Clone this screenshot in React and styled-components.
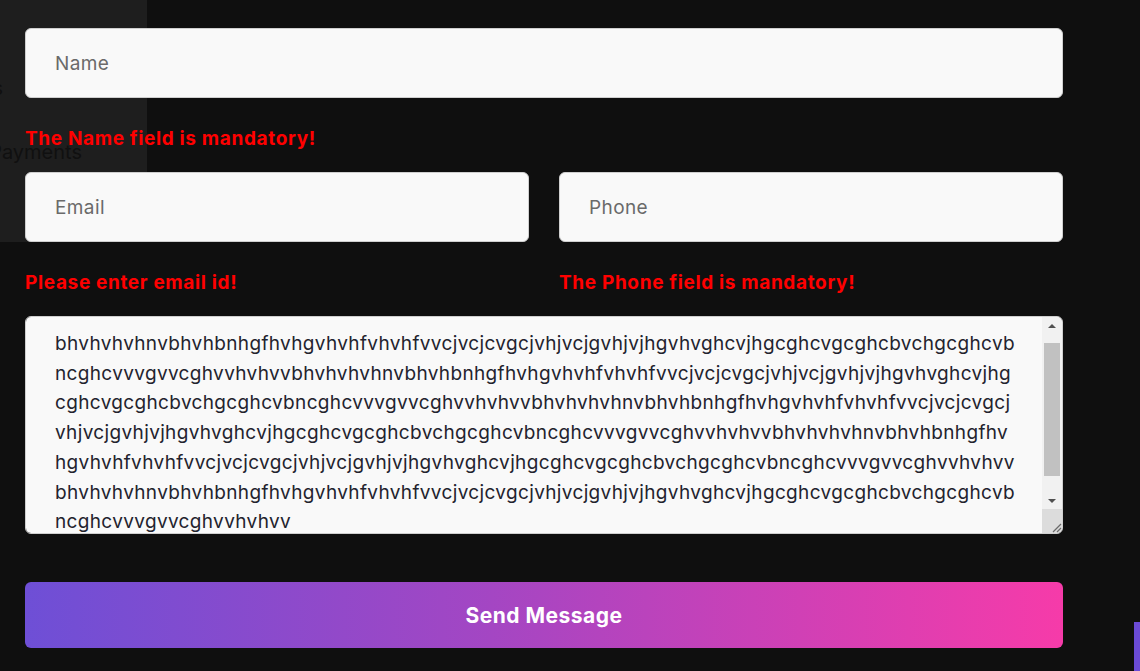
import React, { useEffect, useRef } from "react";
import styled, { createGlobalStyle } from "styled-components";

const GlobalStyle = createGlobalStyle`
  html, body {
    margin: 0;
    padding: 0;
    background: #0f0f0f;
  }
  body {
    font-family: Inter, "Open Sans", sans-serif;
    overflow: hidden;
  }
`;

const Page = styled.div`
  position: relative;
  width: 1140px;
  height: 671px;
  overflow: hidden;
  background: #0f0f0f;
`;

// sidebar peeking out behind the form
const SidePanel = styled.aside`
  position: absolute;
  left: 0;
  top: 0;
  width: 147px;
  height: 242px;
  background: #1e1e1e;
  z-index: 0;
`;

const SideItem = styled.div`
  position: absolute;
  right: ${(p) => p.$right}px;
  top: ${(p) => p.$top}px;
  font-size: 20px;
  color: #101010;
  white-space: nowrap;
`;

const ScrollTopTab = styled.div`
  position: absolute;
  left: 1134px;
  top: 622px;
  width: 40px;
  height: 60px;
  background: #6b4bd6;
`;

const Form = styled.form`
  position: relative;
  z-index: 1;
  width: 1038px;
  padding: 28px 0 0 25px;
  display: flex;
  flex-direction: column;
`;

const Row = styled.div`
  display: grid;
  grid-template-columns: ${(p) => (p.$split ? "1fr 1fr" : "1fr")};
  column-gap: 30px;
`;

const Field = styled.div`
  display: flex;
  flex-direction: column;
`;

const Input = styled.input`
  box-sizing: border-box;
  height: 70px;
  width: 100%;
  padding: 0 29px;
  border: 1px solid #cfcfcf;
  border-radius: 6px;
  background: #f9f9f9;
  font-family: Inter, "Open Sans", sans-serif;
  font-size: 19px;
  color: #222;
  outline: none;

  &::placeholder {
    color: #6a6a6a;
    letter-spacing: 0.4px;
  }
`;

const ErrorText = styled.div`
  margin: 31px 0 23px;
  height: 20px;
  line-height: 20px;
  font-family: Inter, "Open Sans", sans-serif;
  font-size: 19px;
  font-weight: 700;
  color: #ff0000;
  letter-spacing: 0.65px;
`;

const MessageWrap = styled.div`
  position: relative;
  height: 218px;
`;

const MessageBox = styled.textarea`
  display: block;
  box-sizing: border-box;
  width: 100%;
  height: 218px;
  padding: 30px 28px 30px 29px;
  border: 1px solid #cfcfcf;
  border-radius: 6px;
  background: #f9f9f9;
  font-family: Inter, "Open Sans", sans-serif;
  font-size: 19px;
  line-height: 29.7px;
  letter-spacing: 0.35px;
  color: #23232e;
  overflow-y: scroll;
  white-space: pre-wrap;
  resize: none;
  outline: none;
  scrollbar-width: none;

  &::-webkit-scrollbar {
    display: none;
  }
`;

/* drawn scrollbar + resize corner lying over the textarea's right edge */
const Rail = styled.div`
  position: absolute;
  top: 1px;
  right: 1px;
  bottom: 1px;
  width: 20px;
  display: flex;
  flex-direction: column;
  background: #f1f1f1;
  border-top-right-radius: 5px;
  border-bottom-right-radius: 5px;
  overflow: hidden;
`;

const RailButton = styled.div`
  height: 17px;
  display: flex;
  align-items: center;
  justify-content: center;

  &::before {
    content: "";
    border-left: 4px solid transparent;
    border-right: 4px solid transparent;
    ${(p) =>
      p.$down ? "border-top: 4px solid #505050;" : "border-bottom: 4px solid #505050;"}
  }
`;

const Track = styled.div`
  flex: 1;
  padding: 9px 2px 0;
`;

const Thumb = styled.div`
  height: 133px;
  background: #c1c1c1;
`;

const Corner = styled.div`
  height: 24px;
  background: #dcdcdc;
  display: flex;
  align-items: flex-end;
  justify-content: flex-end;
`;

const SendButton = styled.button`
  margin-top: 48px;
  height: 66px;
  width: 100%;
  border: none;
  border-radius: 6px;
  background: linear-gradient(90deg, #6e4fd6 0%, #a446c3 45%, #f63ba9 100%);
  color: #fff;
  font-family: Inter, "Open Sans", sans-serif;
  font-size: 21px;
  font-weight: 700;
  letter-spacing: 0.5px;
  cursor: pointer;
`;

const message = [
  "bhvhvhvhnvbhvhbnhgfhvhgvhvhfvhvhfvvcjvcjcvgcjvhjvcjgvhjvjhgvhvghcvjhgcghcvgcghcbvchgcghcvb",
  "ncghcvvvgvvcghvvhvhvvbhvhvhvhnvbhvhbnhgfhvhgvhvhfvhvhfvvcjvcjcvgcjvhjvcjgvhjvjhgvhvghcvjhg",
  "cghcvgcghcbvchgcghcvbncghcvvvgvvcghvvhvhvvbhvhvhvhnvbhvhbnhgfhvhgvhvhfvhvhfvvcjvcjcvgcj",
  "vhjvcjgvhjvjhgvhvghcvjhgcghcvgcghcbvchgcghcvbncghcvvvgvvcghvvhvhvvbhvhvhvhnvbhvhbnhgfhv",
  "hgvhvhfvhvhfvvcjvcjcvgcjvhjvcjgvhjvjhgvhvghcvjhgcghcvgcghcbvchgcghcvbncghcvvvgvvcghvvhvhvv",
  "bhvhvhvhnvbhvhbnhgfhvhgvhvhfvhvhfvvcjvcjcvgcjvhjvcjgvhjvjhgvhvghcvjhgcghcvgcghcbvchgcghcvb",
  "ncghcvvvgvvcghvvhvhvv",
].join("\n");

export default function App() {
  const boxRef = useRef(null);

  useEffect(() => {
    if (boxRef.current) boxRef.current.scrollTop = 18;
  }, []);

  return (
    <Page>
      <GlobalStyle />
      <SidePanel>
        <SideItem $right={144} $top={76}>Orders</SideItem>
        <SideItem $right={65} $top={140}>Payments</SideItem>
      </SidePanel>

      <Form onSubmit={(e) => e.preventDefault()}>
        <Row>
          <Field>
            <Input placeholder="Name" />
            <ErrorText>The Name field is mandatory!</ErrorText>
          </Field>
        </Row>
        <Row $split>
          <Field>
            <Input placeholder="Email" />
            <ErrorText>Please enter email id!</ErrorText>
          </Field>
          <Field>
            <Input placeholder="Phone" />
            <ErrorText>The Phone field is mandatory!</ErrorText>
          </Field>
        </Row>
        <MessageWrap>
          <MessageBox ref={boxRef} defaultValue={message} />
          <Rail>
            <RailButton />
            <Track>
              <Thumb />
            </Track>
            <RailButton $down />
            <Corner>
              <svg width="12" height="12" viewBox="0 0 12 12">
                <path d="M11 3L3 11M11 7L7 11" stroke="#6a6a6a" strokeWidth="1.2" />
              </svg>
            </Corner>
          </Rail>
        </MessageWrap>
        <SendButton type="submit">Send Message</SendButton>
      </Form>

      <ScrollTopTab />
    </Page>
  );
}
